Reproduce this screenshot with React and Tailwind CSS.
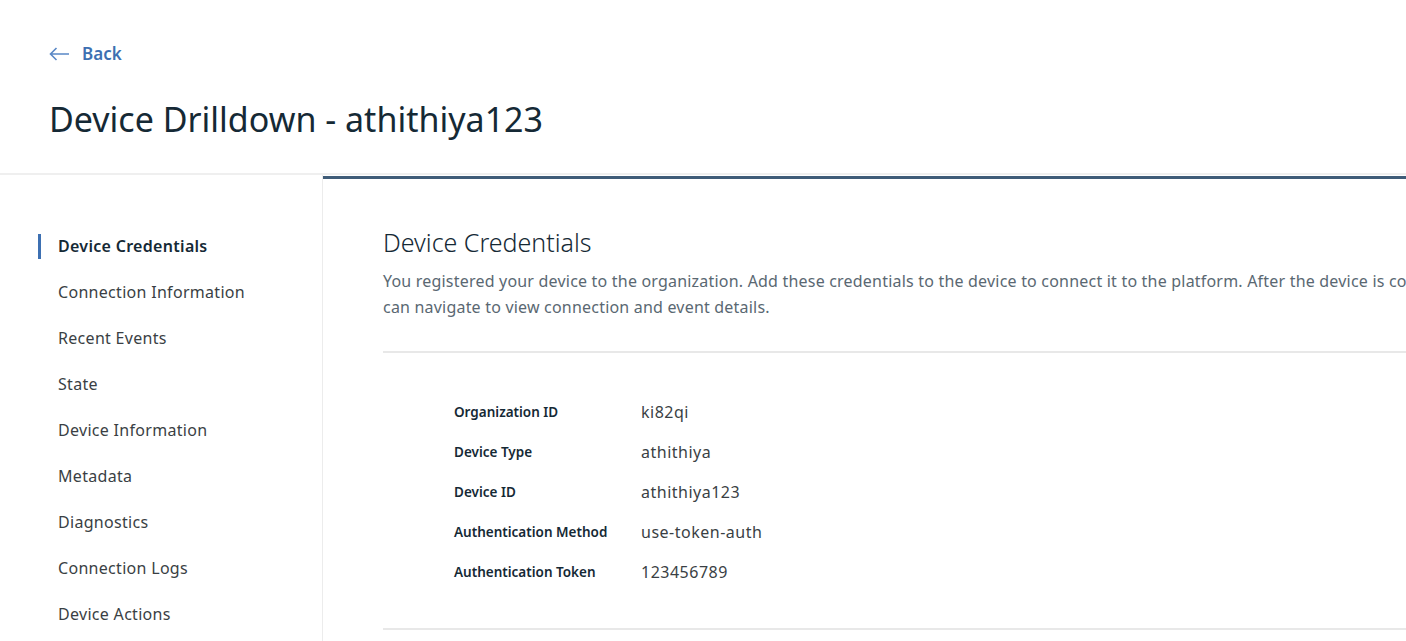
const navItems = [
  "Device Credentials",
  "Connection Information",
  "Recent Events",
  "State",
  "Device Information",
  "Metadata",
  "Diagnostics",
  "Connection Logs",
  "Device Actions",
];

const creds = [
  ["Organization ID", "ki82qi"],
  ["Device Type", "athithiya"],
  ["Device ID", "athithiya123"],
  ["Authentication Method", "use-token-auth"],
  ["Authentication Token", "123456789"],
];

export default function App() {
  return (
    <div
      className="w-[1406px] h-[641px] overflow-hidden bg-white text-[#152935]"
      style={{ fontFamily: '"Noto Sans", "Open Sans", sans-serif' }}
    >
      <header className="h-[175px] pl-[49px] pt-[42px] border-b-2 border-[#efefef]">
        <a className="flex items-center gap-[12px] text-[#3d70b2] text-[17px] font-semibold h-[24px]">
          <svg width="21" height="14" viewBox="0 0 21 14" fill="none" stroke="#5a88c6" strokeWidth="1.6">
            <path d="M1.5 7H20M7.5 1L1.5 7L7.5 13" />
          </svg>
          <span>Back</span>
        </a>
        <h1 className="mt-[30px] text-[34px] leading-[46px] font-normal">Device Drilldown - athithiya123</h1>
      </header>

      <div className="flex h-[466px]">
        <nav className="w-[322px] shrink-0 pt-[48px] pl-[38px]">
          <ul>
            {navItems.map((item, i) => (
              <li key={item} className="h-[46px] flex items-center">
                <span
                  className={`pl-[17px] border-l-[3px] leading-[25px] text-[16px] tracking-[0.3px] ${
                    i === 0 ? "border-[#3d70b2] font-semibold" : "border-transparent text-[#3a3f44]"
                  }`}
                >
                  {item}
                </span>
              </li>
            ))}
          </ul>
        </nav>

        <main className="flex-1 border-l border-[#ececec] overflow-hidden">
          <div className="mt-px border-t-[3px] border-[#3f5c78] pl-[60px] pt-[47px] w-[1200px]">
            <h2 className="text-[25px] leading-[32px] font-light">Device Credentials</h2>
            <p className="mt-[10px] text-[16px] leading-[26px] tracking-[0.2px] text-[#5a6872] whitespace-nowrap">
              You registered your device to the organization. Add these credentials to the device to connect it to the platform. After the device is connected, you
              <br />
              can navigate to view connection and event details.
            </p>
            <div className="mt-[31px] border-t-2 border-[#e8e8e8]" />
            <dl className="pl-[71px] pt-[39px] pb-[36px]">
              {creds.map(([k, v]) => (
                <div key={k} className="flex items-center h-[40px]">
                  <dt className="w-[187px] text-[13.5px] font-semibold">{k}</dt>
                  <dd className="text-[16px] text-[#3a3f44] tracking-[0.5px]">{v}</dd>
                </div>
              ))}
            </dl>
            <div className="border-t-2 border-[#e8e8e8]" />
          </div>
        </main>
      </div>
    </div>
  );
}
